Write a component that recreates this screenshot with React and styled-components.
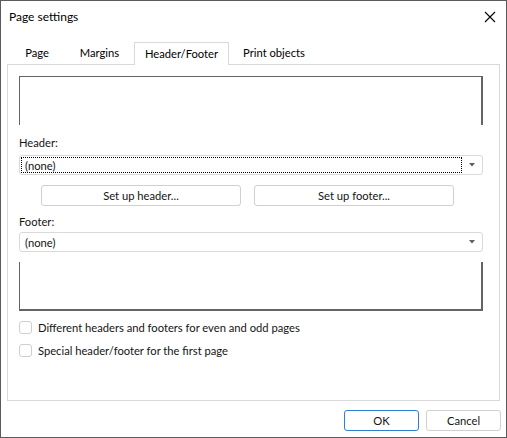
import React, { useState } from 'react';
import styled, { createGlobalStyle } from 'styled-components';

const GlobalStyle = createGlobalStyle`
    html, body {
        margin: 0;
        padding: 0;
        background: #ffffff;
    }
    body {
        font-family: Lato, "Noto Sans", sans-serif;
        font-size: 11.2px;
        color: #141414;
    }
`

const Dialog = styled.div`
    width: 507px;
    height: 438px;
    box-sizing: border-box;
    border: 1px solid #5a5a5a;
    background: #ffffff;
    display: flex;
    flex-direction: column;
`

const TitleBar = styled.div`
    height: 31px;
    display: flex;
    align-items: center;
    justify-content: space-between;
    padding: 0 10px 0 8px;
    font-size: 12px;
    color: #000;
`

const Body = styled.div`
    padding: 10px 6px 0 6px;
    display: flex;
    flex-direction: column;
`

const TabStrip = styled.div`
    display: flex;
    align-items: flex-end;
    height: 22px;
    padding-left: 4px;
`

const Tab = styled.div`
    width: ${(p) => (p.$active ? p.$w + 4 : p.$w)}px;
    height: ${(p) => (p.$active ? 23 : 22)}px;
    box-sizing: border-box;
    display: flex;
    align-items: center;
    justify-content: center;
    padding-bottom: 2px;
    color: #000;
    cursor: default;
    ${(p) => p.$active && `
        margin: 0 -2px -1px -2px;
        border: 1px solid #d9d9d9;
        border-bottom: none;
        background: #ffffff;
        position: relative;
        z-index: 1;
        padding-bottom: 1px;
    `}
`

const Panel = styled.div`
    height: 337px;
    box-sizing: border-box;
    border: 1px solid #d9d9d9;
    padding: 11px 16px 0 11px;
    display: flex;
    flex-direction: column;
`

const Preview = styled.div`
    height: ${(p) => p.$h}px;
    box-sizing: border-box;
    border-left: 1px solid #646464;
    border-right: 2px solid #646464;
    border-top: ${(p) => (p.$top ? '1px solid #646464' : 'none')};
    border-bottom: ${(p) => (p.$bottom ? '2px solid #646464' : 'none')};
    margin-top: ${(p) => p.$mt || 0}px;
`

const Label = styled.div`
    line-height: 16px;
    margin-top: ${(p) => p.$mt}px;
    margin-bottom: ${(p) => p.$mb}px;
`

const Combo = styled.div`
    height: 20px;
    box-sizing: border-box;
    border: 1px solid #d9d9d9;
    border-radius: 3px;
    display: flex;
    align-items: stretch;
    padding: 1px 0 1px 1px;
`

const ComboText = styled.div`
    flex: 1;
    display: flex;
    align-items: center;
    padding-left: 3px;
    border: 1px ${(p) => (p.$focus ? 'dotted #000' : 'solid transparent')};
`

const Arrow = styled.div`
    width: 20px;
    display: flex;
    align-items: center;
    justify-content: center;
`

const ButtonRow = styled.div`
    display: flex;
    gap: 13px;
    margin: 10px 0 0 22px;
`

const Button = styled.button`
    width: ${(p) => p.$w}px;
    height: 21px;
    box-sizing: border-box;
    background: #ffffff;
    border: 1px solid ${(p) => (p.$primary ? '#2f7fd0' : '#d0d0d0')};
    border-radius: 3px;
    font-family: inherit;
    font-size: inherit;
    color: #141414;
    padding: 0 0 1px 0;
    cursor: default;
`

const CheckRow = styled.label`
    display: flex;
    align-items: center;
    gap: 6px;
    height: 18px;
    margin-top: ${(p) => p.$mt}px;
`

const CheckBox = styled.span`
    width: 13px;
    height: 13px;
    box-sizing: border-box;
    border: 1px solid #cfcfcf;
    border-radius: 3px;
    background: #ffffff;
`

const Footer = styled.div`
    display: flex;
    justify-content: flex-end;
    gap: 7px;
    padding-top: 9px;
    margin-right: -1px;
`

const CloseIcon = () => (
    <svg width="12" height="12" viewBox="0 0 12 12">
        <path d="M1 1 L11 11 M11 1 L1 11" stroke="#000" strokeWidth="1.1" fill="none" />
    </svg>
)

const DownArrow = () => (
    <svg width="6" height="4" viewBox="0 0 6 4">
        <path d="M0 0 H6 L3 3.5 Z" fill="#5f5f5f" />
    </svg>
)

const tabs = [
    { name: "Page", w: 52 },
    { name: "Margins", w: 73 },
    { name: "Header/Footer", w: 91 },
    { name: "Print objects", w: 94 },
]

const App = () => {

    // tab yang aktif
    const [active, setActive] = useState("Header/Footer")

    return (
        <>
        <GlobalStyle />
        <Dialog>
            <TitleBar>
                <span>Page settings</span>
                <CloseIcon />
            </TitleBar>
            <Body>
                <TabStrip>
                    {tabs.map((t) => (
                        <Tab key={t.name} $w={t.w} $active={active === t.name} onClick={() => setActive(t.name)}>
                            {t.name}
                        </Tab>
                    ))}
                </TabStrip>
                <Panel>
                    <Preview $h={49} $top />
                    <Label $mt={10} $mb={4}>Header:</Label>
                    <Combo>
                        <ComboText $focus>(none)</ComboText>
                        <Arrow><DownArrow /></Arrow>
                    </Combo>
                    <ButtonRow>
                        <Button $w={200}>Set up header...</Button>
                        <Button $w={200}>Set up footer...</Button>
                    </ButtonRow>
                    <Label $mt={8} $mb={2}>Footer:</Label>
                    <Combo>
                        <ComboText>(none)</ComboText>
                        <Arrow><DownArrow /></Arrow>
                    </Combo>
                    <Preview $h={49} $bottom $mt={10} />
                    <CheckRow $mt={7}>
                        <CheckBox />
                        Different headers and footers for even and odd pages
                    </CheckRow>
                    <CheckRow $mt={5}>
                        <CheckBox />
                        Special header/footer for the first page
                    </CheckRow>
                </Panel>
                <Footer>
                    <Button $w={75} $primary>OK</Button>
                    <Button $w={75}>Cancel</Button>
                </Footer>
            </Body>
        </Dialog>
        </>
    );
}

export default App;
